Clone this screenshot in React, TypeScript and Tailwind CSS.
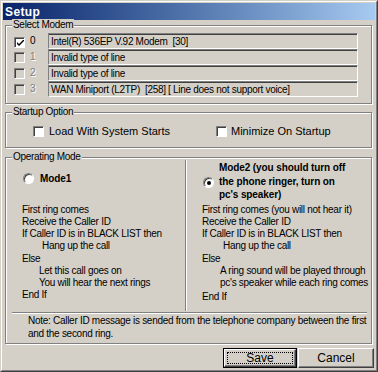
import React from "react";

function Check({ checked = false, disabled = false }: { checked?: boolean; disabled?: boolean }) {
  return (
    <span
      className={`inline-flex items-center justify-center w-[11px] h-[11px] shrink-0 border border-t-[#808080] border-l-[#808080] border-r-white border-b-white shadow-[inset_1px_1px_0_#404040] ${
        disabled ? "bg-[#d4d0c8]" : "bg-white"
      }`}
    >
      {checked && (
        <svg width="7" height="7" viewBox="0 0 7 7" className="ml-[1px] mt-[1px]">
          <path d="M0 2 L0 4 L2 6 L7 1 L7 -1 L2 4 Z" fill="#000" />
        </svg>
      )}
    </span>
  );
}

function Radio({ checked = false }: { checked?: boolean }) {
  return (
    <span className="inline-flex items-center justify-center w-[11px] h-[11px] shrink-0 rounded-full border border-t-[#808080] border-l-[#808080] border-r-white border-b-white bg-white shadow-[inset_1px_1px_0_#404040]">
      {checked && <span className="w-[4px] h-[4px] rounded-full bg-black ml-[1px] mt-[1px]" />}
    </span>
  );
}

function Group({ label, className, children }: { label: string; className: string; children?: React.ReactNode }) {
  return (
    <div className={`relative w-[367px] border border-[#808080] shadow-[inset_1px_1px_0_#fff,1px_1px_0_#fff] ${className}`}>
      <span className="absolute left-[6px] top-[-7px] px-[1px] bg-[#d4d0c8] text-[10px] leading-[12px] tracking-[-0.3px] whitespace-nowrap">
        {label}
      </span>
      {children}
    </div>
  );
}

const modems = [
  { n: "0", text: "Intel(R) 536EP V.92 Modem  [30]", checked: true, disabled: false },
  { n: "1", text: "Invalid type of line", checked: false, disabled: true },
  { n: "2", text: "Invalid type of line", checked: false, disabled: true },
  { n: "3", text: "WAN Miniport (L2TP)  [258] [ Line does not support voice]", checked: false, disabled: true },
];

export default function App() {
  return (
    <div className="w-[378px] h-[372px] bg-[#d4d0c8] border border-t-[#d4d0c8] border-l-[#d4d0c8] border-r-[#404040] border-b-[#404040] font-['Liberation_Sans',Arial,sans-serif] text-black overflow-hidden">
      <div className="h-full border border-t-white border-l-white border-r-[#808080] border-b-[#808080] p-px flex flex-col">
        <div className="h-[17px] shrink-0 bg-linear-to-r from-[#0a246a] to-[#a6caf0] flex items-center pl-[2px] text-white font-bold text-[12px] tracking-[0.4px]">
          Setup
        </div>

        <div className="flex flex-col pl-[2px]">
          <Group label="Select Modem" className="mt-[5px] h-[79px]">
            <div className="pt-[7px] flex flex-col">
              {modems.map((m) => (
                <div key={m.n} className="flex items-center h-[16px]">
                  <span className="ml-[8px] mt-[1px]">
                    <Check checked={m.checked} disabled={m.disabled} />
                  </span>
                  <span
                    className={`ml-[5px] w-[18px] text-[10px] leading-[12px] ${
                      m.disabled ? "text-[#808080] [text-shadow:1px_1px_0_#fff]" : "text-black"
                    }`}
                  >
                    {m.n}
                  </span>
                  <div className="w-[310px] h-[16px] flex items-center pl-[2px] border-l border-t border-l-[#808080] border-t-[#808080] border-r border-b border-r-white border-b-white shadow-[inset_0_1px_0_#404040] text-[10px] tracking-[-0.3px] whitespace-pre">
                    {m.text}
                  </div>
                </div>
              ))}
            </div>
          </Group>

          <Group label="Startup Option" className="mt-[8px] h-[36px]">
            <div className="h-full flex items-center pt-[2px]">
              <div className="ml-[27px] w-[183px] flex items-center">
                <Check />
                <span className="ml-[5px] text-[11px] leading-[13px]">Load With System Starts</span>
              </div>
              <div className="flex items-center">
                <Check />
                <span className="ml-[4px] text-[11px] leading-[13px]">Minimize On Startup</span>
              </div>
            </div>
          </Group>

          <Group label="Operating Mode" className="mt-[9px] h-[187px]">
            <div className="flex flex-col text-[10px] tracking-[-0.28px]">
              <div className="h-[154px] flex">
                <div className="w-[179px] flex flex-col">
                  <div className="mt-[15px] ml-[17px] h-[11px] flex items-center">
                    <Radio />
                    <span className="ml-[6px] font-bold tracking-[-0.1px] leading-[12px]">Mode1</span>
                  </div>
                  <div className="mt-[20px] pl-[16px] flex flex-col leading-[12px]">
                    <div className="h-[12px]">First ring comes</div>
                    <div className="h-[12px]">Receive the Caller ID</div>
                    <div className="h-[12px]">If Caller ID is in BLACK LIST then</div>
                    <div className="h-[12px] pl-[20px]">Hang up the call</div>
                    <div className="h-[12px] mt-[1px]">Else</div>
                    <div className="h-[12px] pl-[17px]">Let this call goes on</div>
                    <div className="h-[12px] pl-[17px]">You will hear the next rings</div>
                    <div className="h-[12px]">End If</div>
                  </div>
                </div>
                <div className="w-[2px] mt-[2px] mb-[1px] border-l border-l-[#808080] border-r border-r-white" />
                <div className="flex-1 flex flex-col">
                  <div className="mt-[3px] h-[41px] flex items-center">
                    <span className="ml-[16px]">
                      <Radio checked />
                    </span>
                    <div className="ml-[5px] font-bold tracking-[-0.1px] leading-[13.5px]">
                      <div>Mode2 (you should turn off</div>
                      <div>the phone ringer, turn on</div>
                      <div>pc's speaker)</div>
                    </div>
                  </div>
                  <div className="mt-[2px] pl-[15px] flex flex-col leading-[12px]">
                    <div className="h-[12px]">First ring comes (you will not hear it)</div>
                    <div className="h-[12px]">Receive the Caller ID</div>
                    <div className="h-[12px]">If Caller ID is in BLACK LIST then</div>
                    <div className="h-[12px] pl-[21px]">Hang up the call</div>
                    <div className="h-[12px] mt-[1px]">Else</div>
                    <div className="h-[12px] pl-[18px]">A ring sound will be played through</div>
                    <div className="h-[12px] pl-[18px]">pc's speaker while each ring comes</div>
                    <div className="h-[12px] mt-[2px]">End If</div>
                  </div>
                </div>
              </div>
              <div className="ml-[6px] mr-[4px] h-[2px] border-t border-t-[#808080] border-b border-b-white" />
              <div className="pl-[22px] leading-[13px]">
                <div>Note: Caller ID message is sended from the telephone company between the first</div>
                <div>and the second ring.</div>
              </div>
            </div>
          </Group>

          <div className="mt-[4px] flex justify-end gap-[1px] pr-[1px]">
            <button className="w-[74px] h-[20px] border border-black p-0 bg-[#d4d0c8]">
              <div className="w-full h-full border border-t-white border-l-white border-r-[#404040] border-b-[#404040] shadow-[inset_-1px_-1px_0_#808080] p-[2px]">
                <div className="w-full h-full border border-dotted border-black flex items-center justify-center text-[12px] leading-[12px]">
                  Save
                </div>
              </div>
            </button>
            <button className="w-[76px] h-[20px] border border-t-white border-l-white border-r-[#404040] border-b-[#404040] shadow-[inset_-1px_-1px_0_#808080] bg-[#d4d0c8] flex items-center justify-center text-[12px] leading-[12px]">
              Cancel
            </button>
          </div>
        </div>
      </div>
    </div>
  );
}
